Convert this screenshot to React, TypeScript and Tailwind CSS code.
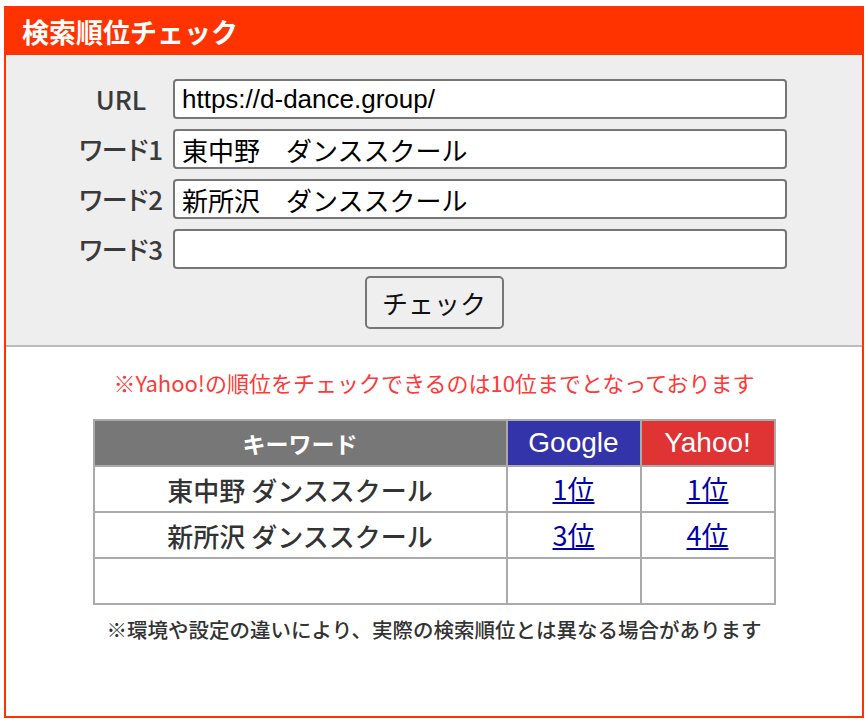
import { useState } from "react";

type Row = { keyword: string; google: string; yahoo: string };

const jp = "font-['Noto_Sans_CJK_JP',sans-serif]";

export default function App() {
  const [url, setUrl] = useState("https://d-dance.group/");
  const [words, setWords] = useState(["東中野　ダンススクール", "新所沢　ダンススクール", ""]);

  const rows: Row[] = [
    { keyword: "東中野 ダンススクール", google: "1位", yahoo: "1位" },
    { keyword: "新所沢 ダンススクール", google: "3位", yahoo: "4位" },
    { keyword: "", google: "", yahoo: "" },
  ];

  const fields = [
    { label: "URL", value: url, onChange: (v: string) => setUrl(v) },
    ...words.map((w, i) => ({
      label: `ワード${i + 1}`,
      value: w,
      onChange: (v: string) => setWords((ws) => ws.map((x, j) => (j === i ? v : x))),
    })),
  ];

  return (
    <div className={`bg-white min-h-[724px] pt-[6px] px-[4px] ${jp}`}>
      <div className="h-[712px] border-2 border-[#ff3300] flex flex-col">
        {/* header */}
        <div className="h-[47px] bg-[#ff3300] flex items-center pl-[16px]">
          <h1 className="text-white text-[27px] font-bold leading-none">検索順位チェック</h1>
        </div>

        {/* form */}
        <div className="bg-[#eeeeee] border-b-2 border-[#bbbbbb] pt-[24px] pb-[16px] flex flex-col">
          <div className="flex flex-col gap-[10px]">
            {fields.map((f) => (
              <div key={f.label} className="flex items-center pl-[70px] gap-[7px]">
                <label className="w-[90px] text-center text-[26px] leading-none text-[#3a3a3a] font-medium [font-feature-settings:'palt']">
                  {f.label}
                </label>
                <input
                  value={f.value}
                  onChange={(e) => f.onChange(e.target.value)}
                  className="w-[614px] h-[40px] bg-white border-2 border-[#767676] rounded-[4px] px-[7px] text-[26px] text-black font-['Liberation_Sans','Noto_Sans_CJK_JP',sans-serif] outline-none"
                />
              </div>
            ))}
          </div>
          <button className="mt-[7px] self-center h-[53px] w-[139px] border-2 border-[#767676] rounded-[5px] bg-[#efefef] text-[26px] text-[#111] leading-none">
            チェック
          </button>
        </div>

        {/* results */}
        <div className="flex-1 flex flex-col items-center pt-[20px]">
          <p className="text-[22px] leading-[30px] text-[#ff3838]">
            ※Yahoo!の順位をチェックできるのは10位までとなっております
          </p>

          <table className="mt-[22px] table-fixed w-[683px] border-separate border-spacing-[2px] bg-[#aaaaaa]">
            <colgroup>
              <col className="w-[411px]" />
              <col className="w-[132px]" />
              <col className="w-[132px]" />
            </colgroup>
            <thead>
              <tr className="h-[44px]">
                <th className="bg-[#777777] text-white text-[23px] font-bold">キーワード</th>
                <th className="bg-[#3333aa] text-white text-[28px] font-normal font-['Liberation_Sans',sans-serif]">Google</th>
                <th className="bg-[#e03333] text-white text-[28px] font-normal font-['Liberation_Sans',sans-serif]">Yahoo!</th>
              </tr>
            </thead>
            <tbody>
              {rows.map((r, i) => (
                <tr key={i} className="h-[44px]">
                  <td className="bg-white text-center text-[26px] font-medium text-[#333]">{r.keyword}</td>
                  <td className="bg-white text-center text-[27px]">
                    {r.google && <a href="#" className="text-[#0000aa] underline">{r.google}</a>}
                  </td>
                  <td className="bg-white text-center text-[27px]">
                    {r.yahoo && <a href="#" className="text-[#0000aa] underline">{r.yahoo}</a>}
                  </td>
                </tr>
              ))}
            </tbody>
          </table>

          <p className="mt-[10px] text-[20.5px] leading-[28px] font-medium text-[#333]">
            ※環境や設定の違いにより、実際の検索順位とは異なる場合があります
          </p>
        </div>
      </div>
    </div>
  );
}
